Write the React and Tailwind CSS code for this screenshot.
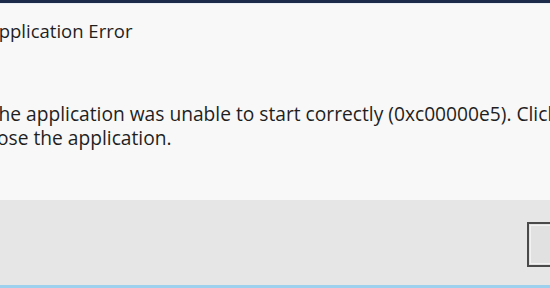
export default function App() {
  return (
    <div
      className="w-[550px] h-[288px] overflow-hidden flex flex-col bg-[#f8f8f8] text-[#1f1f1f]"
      style={{ fontFamily: '"Open Sans", "Noto Sans", sans-serif' }}
    >
      <div className="h-[3px] bg-[#1c2b4a] shrink-0" />
      <div className="h-px bg-[#e9eef5] shrink-0" />
      <div className="flex-1 flex flex-col -ml-[12px] pt-[13px]">
        <h1 className="-ml-px text-[18.5px] leading-[28px] font-normal whitespace-nowrap">Application Error</h1>
        <div className="mt-[57px] text-[19.2px] leading-[24px] whitespace-nowrap">
          <p>The application was unable to start correctly (0xc00000e5). Click OK to</p>
          <p className="-ml-[5px]">close the application.</p>
        </div>
      </div>
      <div className="h-[85px] shrink-0 bg-[#e6e6e6] flex items-start pl-[527px] pt-[22px]">
        <button className="w-[110px] h-[45px] shrink-0 border-2 border-[#4a4a4a] bg-[#e1e1e1] p-px">
          <span className="block w-full h-full border border-[#f2f2f2]" />
        </button>
      </div>
      <div className="h-[3px] bg-[#9dd0ec] shrink-0" />
    </div>
  );
}
